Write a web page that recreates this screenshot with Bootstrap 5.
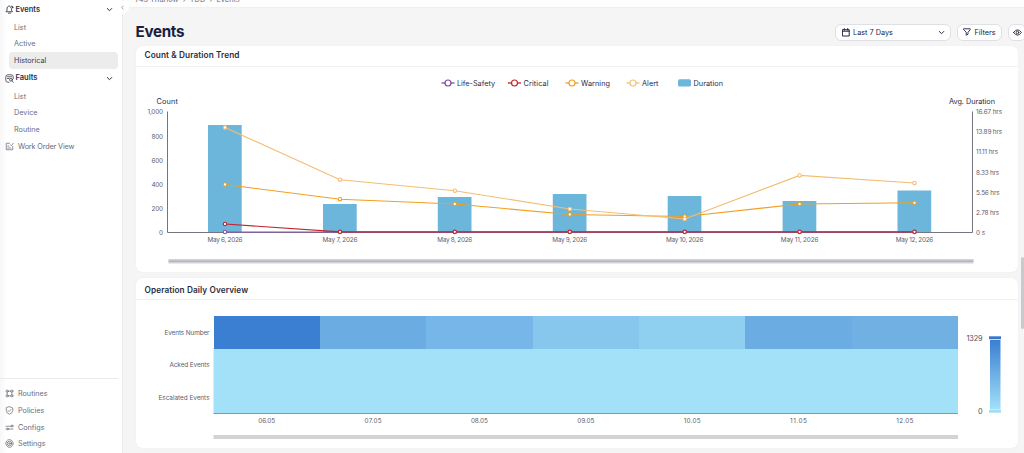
<!DOCTYPE html>
<html lang="en">
<head>
<meta charset="utf-8">
<meta name="viewport" content="width=device-width, initial-scale=1">
<title>Events</title>
<link href="https://cdn.jsdelivr.net/npm/bootstrap@5.3.0/dist/css/bootstrap.min.css" rel="stylesheet">
<style>
body{font-family:Inter,"Liberation Sans",sans-serif;font-size:7.3px;line-height:1;color:#20253f;background:#f5f5f5;height:100vh;overflow:hidden}
.side{width:123px;background:linear-gradient(90deg,#f7f7f7,#fff 7px);border-right:1px solid #ebebeb;padding-right:4px}
.side .side-link{height:16.75px;padding-left:14px;padding-top:.5px;color:#6b6d7a;text-decoration:none;white-space:nowrap;font-size:7.25px}
.side .side-group{height:18.65px;padding:0 5px 0 5px;font-weight:600;font-size:7.5px;color:#2c2e3d}
.side .side-group span{margin-left:1.5px}
.side .picked{background:#ececec;border-radius:4px;margin-left:9px;padding-left:5px;color:#3c3e4a}
.side .with-icon{padding-left:5px;gap:4px;letter-spacing:-.02px}
.side .long{letter-spacing:-.14px}
.side-foot{border-top:1px solid #eaeaea;height:75px;padding-top:6px}
.line-icon{fill:none;stroke:currentColor;stroke-linecap:round;stroke-linejoin:round;flex:none}
.crumbs{height:8px;background:#fdfdfd;border-bottom:1px solid #f0f0f0;padding-left:12px;font-size:7.4px;color:#6d6f7c;white-space:pre}
.crumbs span{margin-top:-4.5px}
.collapse-knob{left:116px;top:1px;width:13px;height:13px;background:#fff;color:#777}
.page-title{font-size:15.2px;font-weight:700;letter-spacing:-.3px;padding-top:1.5px;color:#1b1f3f}
.title-row{height:38px;padding:9px 0 0 12.5px}
.pill{height:17px;background:#fff;border:1px solid #dfe0e5;border-radius:6px;color:#20253f;font-size:7.3px;line-height:1;white-space:nowrap}
.panel{margin:0 6px 0 13px;border:0;border-radius:6px;background:#fff;box-shadow:0 0 1px #d9d9d9}
.panel-title{padding-left:8.5px;font-size:8.25px;letter-spacing:.09px;font-weight:600;color:#2b2e42;border-bottom:1px solid #f2f2f2}
svg text{font-family:Inter,"Liberation Sans",sans-serif}
.tick{font-size:6.4px;fill:#5e606b}
.name{font-size:7.3px;fill:#272b48}
.thumb{right:0;top:257px;width:3px;height:72px;background:#c9c9cf;border-radius:2px}
</style>
</head>
<body class="d-flex position-relative">
<aside class="side d-flex flex-column flex-shrink-0">
  <div class="side-group d-flex align-items-center">
    <svg class="line-icon" width="9" height="9" viewBox="0 0 18 18" stroke-width="1.7"><path d="M9.500 2C5 1.500 4 5 4 8v2.500L2 13.500h13l-2-3V9M7 16.300h4"/><circle cx="13.500" cy="4.500" r="2.200"/></svg>
    <span>Events</span>
    <svg class="line-icon ms-auto" width="7" height="7" viewBox="0 0 7 7"><path d="M1.300 2.500 3.500 4.700 5.700 2.500"/></svg>
  </div>
  <a class="side-link d-flex align-items-center">List</a>
  <a class="side-link d-flex align-items-center">Active</a>
  <a class="side-link picked d-flex align-items-center">Historical</a>
  <div class="side-group d-flex align-items-center">
    <svg class="line-icon" width="9" height="9" viewBox="0 0 18 18" stroke-width="1.500"><path d="M8 16.500H6Q1.500 16.500 1.500 12V6Q1.500 1.500 6 1.500h6q4.500 0 4.500 4.500v3M5 5.500h8M5 9h3"/><circle cx="12" cy="11.500" r="2.800"/><path d="m14.200 13.800 2.300 2.700"/></svg>
    <span>Faults</span>
    <svg class="line-icon ms-auto" width="7" height="7" viewBox="0 0 7 7"><path d="M1.300 2.500 3.500 4.700 5.700 2.500"/></svg>
  </div>
  <a class="side-link d-flex align-items-center">List</a>
  <a class="side-link d-flex align-items-center">Device</a>
  <a class="side-link d-flex align-items-center">Routine</a>
  <a class="side-link with-icon long d-flex align-items-center">
    <svg class="line-icon" width="9" height="9" viewBox="0 0 18 18" stroke-width="1.500"><path d="M9 2.500H2.500v13h13V9M5.500 8H8M5.500 12h6M11 5.500l2 2 3.500-5"/></svg>Work Order View</a>
  <div class="side-foot mt-auto">
    <a class="side-link with-icon d-flex align-items-center">
      <svg class="line-icon" width="9" height="9" viewBox="0 0 18 18" stroke-width="1.500"><circle cx="4.300" cy="4.300" r="2.200"/><circle cx="13.700" cy="4.300" r="2.200"/><circle cx="4.300" cy="13.700" r="2.200"/><circle cx="13.700" cy="13.700" r="2.200"/><path d="M6.500 4.300h5M6.500 13.700h5M4.300 6.500v5M13.700 6.500v5"/></svg>Routines</a>
    <a class="side-link with-icon d-flex align-items-center">
      <svg class="line-icon" width="9" height="9" viewBox="0 0 18 18" stroke-width="1.500"><path d="M9 1.500 15.500 4v5q0 5-6.500 7.500Q2.500 14 2.500 9V4z"/><path d="m6 9 2 2 4-4"/></svg>Policies</a>
    <a class="side-link with-icon d-flex align-items-center">
      <svg class="line-icon" width="9" height="9" viewBox="0 0 18 18" stroke-width="1.500"><path d="M2 6.500h10M6.500 12H16M2 12h1"/><circle cx="14" cy="6" r="2"/><circle cx="5" cy="12" r="1.600"/></svg>Configs</a>
    <a class="side-link with-icon d-flex align-items-center">
      <svg class="line-icon" width="9" height="9" viewBox="0 0 18 18" stroke-width="1.500"><path d="m6 2 3-.8L12 2l3.200 3 1.200 4-1.200 4-3.200 3-3 .8L6 16l-3.200-3-1.200-4 1.200-4z"/><circle cx="9" cy="9" r="4.600"/><circle cx="9" cy="9" r="1.700"/></svg>Settings</a>
  </div>
</aside>
<div class="collapse-knob position-absolute rounded-circle d-flex align-items-center justify-content-center">
  <svg class="line-icon" width="5" height="5" viewBox="0 0 5 5" stroke-width=".7"><path d="M3.200 1 1.700 2.500 3.200 4"/></svg>
</div>
<main class="flex-grow-1 d-flex flex-column overflow-hidden">
  <div class="crumbs d-flex"><span>745 Thurlow  ›  TDD  ›  Events</span></div>
  <div class="title-row d-flex align-items-center">
    <h1 class="page-title m-0">Events</h1>
    <div class="ms-auto d-flex pt-1" style="padding-top:1.5px!important">
      <button class="pill d-flex align-items-center p-0" style="width:116px;margin-right:6px">
        <svg class="line-icon" style="margin-left:6px" width="8" height="9" viewBox="0 0 8 9"><path d="M.8 1.700h6.400v6.300H.8zM.8 3.200h6.400M2.300.6v1.500M5.700.6v1.500"/></svg>
        <span style="margin-left:3px">Last 7 Days</span>
        <svg class="line-icon ms-auto" style="margin-right:5px" width="7" height="7" viewBox="0 0 7 7"><path d="M1.300 2.500 3.500 4.700 5.700 2.500"/></svg>
      </button>
      <button class="pill d-flex align-items-center justify-content-center p-0" style="width:45px;margin-right:6px">
        <svg class="line-icon" width="8" height="8" viewBox="0 0 8 8" stroke-width=".9"><path d="M.8.800h6.400v1L5 4.200v2L3.200 7.300V4.200L.8 1.800z"/></svg>
        <span style="margin-left:3px">Filters</span>
      </button>
      <button class="pill d-flex align-items-center justify-content-center p-0" style="width:18px;margin-right:-2px">
        <svg class="line-icon" width="9" height="7" viewBox="0 0 9 7" stroke-width=".9"><path d="M.6 3.500Q4.500-2 8.400 3.500 4.500 9 .6 3.500z"/><circle cx="4.500" cy="3.500" r="1.300"/></svg>
      </button>
    </div>
  </div>
  <section class="panel" style="height:226px">
    <div class="panel-title d-flex align-items-center" style="height:21px;padding-bottom:1px">Count &amp; Duration Trend</div>
    <svg class="d-block" width="882" height="205" viewBox="136 67 882 205">
      <g id="legend"></g>
      <text class="name" x="156.500" y="103.800" textLength="21.500">Count</text>
      <text class="name" x="949" y="103.800" textLength="46">Avg. Duration</text>
      <g id="trend"></g>
      <path d="M168.500 259h805v4.500h-805z" fill="#d2d2d9"/><path d="M168.500 261.300h805" stroke="#b4b5c2" stroke-width="1.400"/>
    </svg>
  </section>
  <section class="panel" style="height:170px;margin-top:6px">
    <div class="panel-title d-flex align-items-center" style="height:22px;padding-top:2.500px">Operation Daily Overview</div>
    <svg class="d-block" width="882" height="148" viewBox="136 300 882 148">
      <defs><linearGradient id="scale" x2="0" y2="1"><stop stop-color="#3a7fd2"/><stop offset="1" stop-color="#a3e1f9"/></linearGradient></defs>
      <g id="heat"></g>
      <path d="M213.500 437h744.500" stroke="#d3d3d3" stroke-width="4"/>
      <path d="M990 340h10.500v70H990z" fill="url(#scale)"/>
      <path d="M989 336.300h12v3h-12z" fill="#3a76c8"/><path d="M989 339.500h12" stroke="#c8e4f8" stroke-width=".7"/>
      <path d="M989 410h12v2.700h-12z" fill="#9edcf3"/><path d="M989 409.700h12" stroke="#dff4fc" stroke-width=".7"/>
      <text class="name" x="966.500" y="341" textLength="16" style="fill:#50525e">1329</text>
      <text class="name" x="978" y="414.300" style="fill:#50525e">0</text>
    </svg>
  </section>
</main>
<div class="thumb position-absolute"></div>
<script src="https://cdn.jsdelivr.net/npm/bootstrap@5.3.0/dist/js/bootstrap.bundle.min.js"></script>
<script>
const label = (cls, x, y, s, w, anchor = 'start') =>
  `<text class="${cls}" x="${x}" y="${y}" text-anchor="${anchor}"${w ? ` textLength="${w}"` : ''}>${s}</text>`;

// Legend
let out = '';
[['Life-Safety','#7b4ba0',448,457,38],['Critical','#c1272d',514.5,523.500,25],['Warning','#f0a020',572,581,29],['Alert','#f6c078',633,642,16.500]].forEach(([s,c,x,t,w]) => {
  out += `<path d="M${x-6.5} 83h13" stroke="${c}" stroke-width="1.300"/><circle cx="${x}" cy="83" r="3" fill="#fff" stroke="${c}" stroke-width="1.200"/>` + label('name', t, 85.8, s, w);
});
out += '<rect x="678" y="79.300" width="13" height="7.300" rx="1.700" fill="#6bb6da"/>' + label('name', 693.5, 85.8, 'Duration', 29.5);
document.getElementById('legend').innerHTML = out;

// Bars, axes and the four series
const xs = [225,340,454.8,569.8,684.7,799.6,914.5];
out = '';
[125,204,197,194,196,201,190.5].forEach((y,i) => out += `<rect x="${xs[i]-17}" y="${y}" width="33.700" height="${232.5-y}" fill="#6bb6da"/>`);
out += '<path d="M167.500 111.500v121h805v-121" fill="none" stroke="#73757f"/>';
['1,000','800','600','400','200','0'].forEach((s,i) => out += label('tick', 163, 114.4 + i*24.1, s, [15.5,11.5,11.5,11.5,11.5,0][i], 'end'));
['16.67 hrs','13.89 hrs','11.11 hrs','8.33 hrs','5.56 hrs','2.78 hrs','0 s'].forEach((s,i) => out += label('tick', 976, 114.2 + i*20.1, s, [26,26,22,23,23.5,23,9][i]));
xs.forEach((x,i) => out += label('tick', x, 241.5, `May ${i+6}, 2026`, i > 3 ? 37.5 : 35, 'middle'));
const series = [
  ['#8a55b0', [232,232,232,232,232,232,232]],
  ['#c1272d', [224,231.8,231.8,231.8,231.8,231.8,231.8]],
  ['#f0a020', [184.5,199.2,204,214.5,216.5,204,202.8]],
  ['#f4bd74', [127.5,179.7,190.7,209,219,175.400,183]]
];
series.forEach(([c,ys]) => {
  out += `<polyline points="${ys.map((y,i) => xs[i]+','+y).join(' ')}" fill="none" stroke="${c}" stroke-width="1.150"/>`;
  ys.forEach((y,i) => out += `<circle cx="${xs[i]}" cy="${y}" r="1.700" fill="#fff" stroke="${c}" stroke-width="1.100"/>`);
});
document.getElementById('trend').innerHTML = out;

// Heatmap
out = '<path d="M213.500 348h744.500v65.500h-744.500z" fill="#a3e1f9"/>';
['#3a7fd2','#6bace3','#76b6e8','#88c7ed','#8fd0f1','#6bace3','#70b0e3'].forEach((c,i) => {
  out += `<rect x="${213.5+i*106.36}" y="316" width="106.400" height="32.500" fill="${c}" shape-rendering="crispEdges"/>`
    + label('tick', 266.7+i*106.36, 422.7, String(i+6).padStart(2,'0')+'.05', 17, 'middle');
});
out += '<path d="M213.500 413.500h744.500" stroke="#7e9aab"/>';
[['Events Number',45],['Acked Events',40],['Escalated Events',51]].forEach(([s,w],i) => out += label('tick', 209.5, 334.8+i*32.5, s, w, 'end'));
document.getElementById('heat').innerHTML = out;
</script>
</body>
</html>
